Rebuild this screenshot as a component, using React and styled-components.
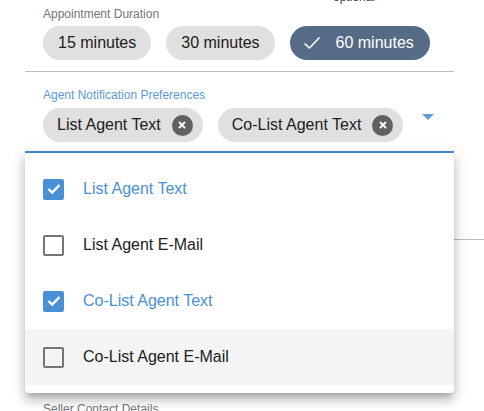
import React from 'react'
import styled, { createGlobalStyle } from 'styled-components'

const GlobalStyle = createGlobalStyle`
  html, body { margin: 0; padding: 0; background: #fff; overflow: hidden; }
  body { font-family: "Liberation Sans", Arial, sans-serif; color: #212121; }
`

const durations = ['15 minutes', '30 minutes', '60 minutes']
const selected = ['List Agent Text', 'Co-List Agent Text']
const options = [
  { label: 'List Agent Text', checked: true },
  { label: 'List Agent E-Mail', checked: false },
  { label: 'Co-List Agent Text', checked: true },
  { label: 'Co-List Agent E-Mail', checked: false, hover: true },
]

function App() {
  return (
    <>
      <GlobalStyle />
      <Page>
        <Optional>
          <span>optional</span>
        </Optional>
        <Field>
          <Label>Appointment Duration</Label>
          <ChipRow>
            {durations.map((d) => (
              <DurationChip key={d} $active={d === '60 minutes'}>
                {d === '60 minutes' && (
                  <svg width="18" height="14" viewBox="0 0 18 14">
                    <path d="M1.5 7.5 L6.5 12 L16.5 1.5" fill="none" stroke="#fff" strokeWidth="1.6" />
                  </svg>
                )}
                {d}
              </DurationChip>
            ))}
          </ChipRow>
        </Field>
        <Divider />
        <SelectWrap>
          <SelectField>
            <Label $focused>Agent Notification Preferences</Label>
            <SelectRow>
              <ChipRow>
                {selected.map((s) => (
                  <TagChip key={s}>
                    {s}
                    <RemoveIcon>
                      <svg width="8" height="8" viewBox="0 0 8 8">
                        <path d="M1 1 L7 7 M7 1 L1 7" stroke="#fff" strokeWidth="1.8" />
                      </svg>
                    </RemoveIcon>
                  </TagChip>
                ))}
              </ChipRow>
              <Arrow />
            </SelectRow>
          </SelectField>
          <Menu>
            {options.map((o) => (
              <MenuItem key={o.label} $hover={o.hover}>
                <Box $checked={o.checked}>
                  {o.checked && (
                    <svg width="14" height="12" viewBox="0 0 14 12">
                      <path d="M1.5 6 L5.2 9.6 L12.5 2" fill="none" stroke="#fff" strokeWidth="2.4" />
                    </svg>
                  )}
                </Box>
                <ItemText $checked={o.checked}>{o.label}</ItemText>
              </MenuItem>
            ))}
          </Menu>
        </SelectWrap>
        <Rest>
          <WideDivider />
          <Field>
            <Label>Seller Contact Details</Label>
          </Field>
        </Rest>
      </Page>
    </>
  )
}

export default App

const Page = styled.div`
  padding-left: 25px;
  width: 429px;
`
const Optional = styled.div`
  height: 5px;
  padding-left: 308px;
  font-size: 12px;
  color: #424242;
  span {
    display: block;
    line-height: 14px;
    transform: translateY(-10px);
  }
`
const Field = styled.div`
  padding-left: 18px;
`
const Label = styled.div`
  font-size: 12px;
  line-height: 14px;
  margin-top: 2px;
  color: ${(p) => (p.$focused ? '#5c9bd8' : '#757575')};
`
const ChipRow = styled.div`
  display: flex;
  gap: 15px;
  margin-top: 5px;
`
const DurationChip = styled.div`
  display: flex;
  align-items: center;
  gap: 15px;
  height: 34px;
  border-radius: 17px;
  font-size: 16px;
  padding: ${(p) => (p.$active ? '0 16px 0 13px' : '0 15px')};
  background: ${(p) => (p.$active ? '#566b85' : '#e0e0e0')};
  color: ${(p) => (p.$active ? '#fff' : '#212121')};
`
const Divider = styled.div`
  height: 1px;
  background: #bdbdbd;
  margin-top: 11px;
`
const SelectWrap = styled.div`
  position: relative;
`
const SelectField = styled.div`
  padding: 14px 0 9px 18px;
  border-bottom: 2px solid #4a8bcb;
`
const SelectRow = styled.div`
  display: flex;
  align-items: flex-start;
  ${ChipRow} {
    margin-top: 6px;
  }
`
const TagChip = styled.div`
  display: flex;
  align-items: center;
  gap: 11px;
  height: 34px;
  border-radius: 17px;
  padding: 0 10px 0 14px;
  background: #e0e0e0;
  font-size: 16px;
  color: #212121;
`
const RemoveIcon = styled.span`
  width: 21px;
  height: 21px;
  border-radius: 50%;
  background: #616161;
  display: flex;
  align-items: center;
  justify-content: center;
`
const Arrow = styled.div`
  width: 0;
  height: 0;
  margin: 12px 0 0 19px;
  border-left: 6px solid transparent;
  border-right: 6px solid transparent;
  border-top: 6px solid #5c9bd8;
`
const Menu = styled.div`
  position: absolute;
  top: 100%;
  left: 0;
  right: 0;
  background: #fff;
  padding: 8px 0;
  border-radius: 0 0 4px 4px;
  box-shadow: 0 5px 5px -3px rgba(0, 0, 0, 0.2), 0 8px 10px 1px rgba(0, 0, 0, 0.14),
    0 3px 14px 2px rgba(0, 0, 0, 0.12);
  z-index: 2;
`
const MenuItem = styled.div`
  display: flex;
  align-items: center;
  gap: 19px;
  height: 56px;
  padding-left: 18px;
  background: ${(p) => (p.$hover ? '#f4f4f4' : 'transparent')};
`
const Box = styled.span`
  box-sizing: border-box;
  width: 21px;
  height: 21px;
  border-radius: 2px;
  display: flex;
  align-items: center;
  justify-content: center;
  border: 2px solid ${(p) => (p.$checked ? '#4a90d4' : '#757575')};
  background: ${(p) => (p.$checked ? '#4a90d4' : 'transparent')};
`
const ItemText = styled.span`
  font-size: 16px;
  color: ${(p) => (p.$checked ? '#4a90d4' : '#212121')};
`
const Rest = styled.div`
  padding-top: 86px;
`
const WideDivider = styled.div`
  height: 1px;
  width: 459px;
  background: #bdbdbd;
  margin-bottom: 162px;
`
